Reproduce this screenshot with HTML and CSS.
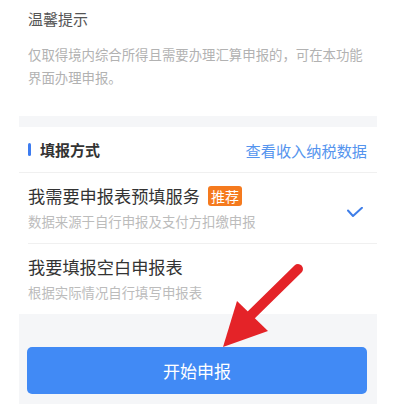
FILE: index.html
```html
<!DOCTYPE html>
<html lang="zh-CN">
<head>
    <meta charset="UTF-8">
    <meta name="viewport" content="width=device-width, initial-scale=1.0">
    <title>填报方式</title>
    <link rel="stylesheet" href="styles.css">
</head>
<body>
    <div class="page">
        <!-- Tip -->
        <div class="tip">
            <h2 class="tip-title">温馨提示</h2>
            <p class="tip-text">仅取得境内综合所得且需要办理汇算申报的，可在本功能界面办理申报。</p>
        </div>
        <div class="gap"></div>

        <!-- Filing method -->
        <div class="section-head">
            <span class="bar"></span>
            <span class="section-title">填报方式</span>
            <a href="#" class="section-link">查看收入纳税数据</a>
        </div>
        <div class="option">
            <div class="option-inner with-line">
                <div class="option-text">
                    <div class="option-title">我需要申报表预填服务 <span class="badge">推荐</span></div>
                    <div class="option-sub">数据来源于自行申报及支付方扣缴申报</div>
                </div>
                <svg class="check" width="16" height="12" viewBox="0 0 16 12">
                    <polyline points="1,3.5 6,9 15,0.8" fill="none" stroke="#3f7ee8" stroke-width="2" stroke-linecap="round" stroke-linejoin="round"/>
                </svg>
            </div>
        </div>
        <div class="option">
            <div class="option-inner">
                <div class="option-text">
                    <div class="option-title">我要填报空白申报表</div>
                    <div class="option-sub">根据实际情况自行填写申报表</div>
                </div>
            </div>
        </div>

        <!-- Bottom -->
        <div class="footer">
            <button class="start-btn">开始申报</button>
        </div>
    </div>

    <!-- Red arrow annotation -->
    <svg class="arrow" width="394" height="404" viewBox="0 0 394 404">
        <line x1="298" y1="269" x2="246" y2="320" stroke="#e42328" stroke-width="10" stroke-linecap="round"/>
        <polygon points="223,347 237,301 268,331" fill="#e42328"/>
    </svg>
</body>
</html>
```

FILE: styles.css
```css
body {
    margin: 0;
    background: #fff;
    font-family: "Noto Sans CJK SC", "Noto Sans", sans-serif;
    position: relative;
    height: 404px;
    overflow: hidden;
}

.page {
    width: 358px;
    margin-left: 19px;
}

/* Tip */
.tip {
    padding: 8px 9px 27px;
}

.tip-title {
    margin: 0;
    font-size: 15px;
    line-height: 21px;
    font-weight: normal;
    color: #555;
}

.tip-text {
    margin: 14px 0 0;
    font-size: 13.4px;
    line-height: 23px;
    color: #b2b2b2;
}

.gap {
    height: 11px;
    background: #f5f6f8;
}

/* Section header */
.section-head {
    display: flex;
    align-items: center;
    height: 45px;
    padding: 0 10px 0 9px;
    border-bottom: 1px solid #f0f0f0;
}

.bar {
    width: 3px;
    height: 13px;
    border-radius: 2px;
    background: #3d7cf0;
    margin-right: 9px;
}

.section-title {
    font-size: 15px;
    font-weight: bold;
    color: #333;
    flex: 1;
}

.section-link {
    font-size: 15.2px;
    color: #5594ee;
    text-decoration: none;
}

/* Options */
.option {
    padding-left: 9px;
}

.option-inner {
    display: flex;
    align-items: center;
    padding: 11px 14px 12px 0;
}

.with-line {
    border-bottom: 1px solid #f0f0f0;
}

.option-text {
    flex: 1;
}

.option-title {
    font-size: 17.2px;
    line-height: 24px;
    color: #333;
    display: flex;
    align-items: center;
}

.badge {
    display: inline-block;
    margin-left: 8px;
    padding: 0 3px;
    height: 20px;
    line-height: 20px;
    font-size: 14px;
    color: #fff;
    background: #f57a1e;
    border-radius: 3px;
}

.option-sub {
    margin-top: 3px;
    font-size: 13.4px;
    line-height: 20px;
    color: #bcbcbc;
}

.check {
    margin-top: 10px;
}

/* Footer */
.footer {
    background: #f5f6f8;
    padding: 33px 10px 11px 8px;
    height: 47px;
}

.start-btn {
    display: block;
    width: 100%;
    height: 47px;
    border: none;
    border-radius: 5px;
    background: #418af5;
    color: #fff;
    font-family: inherit;
    font-size: 17px;
}

/* Annotation overlay */
.arrow {
    position: absolute;
    left: 0;
    top: 0;
}
```
